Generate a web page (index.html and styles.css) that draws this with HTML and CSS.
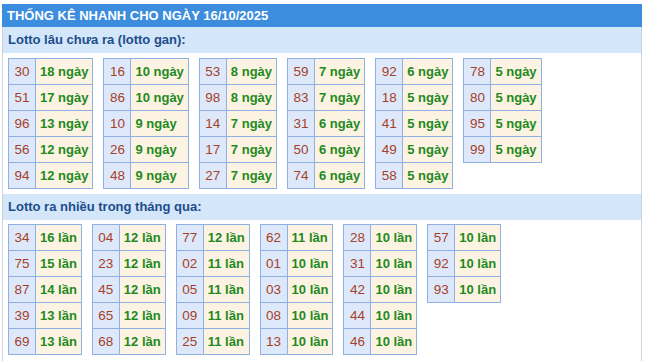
FILE: index.html
```html
<!DOCTYPE html>
<html lang="vi">
<head>
<meta charset="utf-8">
<title>Thống kê nhanh</title>
<link rel="stylesheet" href="styles.css">
</head>
<body>
<div class="wrap">
  <div class="title">THỐNG KÊ NHANH CHO NGÀY 16/10/2025</div>
  <div class="box">
    <div class="sec">Lotto lâu chưa ra (lotto gan):</div>
    <div class="tables">
      <table><tr><td class="n">30</td><td class="v">18 ngày</td></tr><tr><td class="n">51</td><td class="v">17 ngày</td></tr><tr><td class="n">96</td><td class="v">13 ngày</td></tr><tr><td class="n">56</td><td class="v">12 ngày</td></tr><tr><td class="n">94</td><td class="v">12 ngày</td></tr></table>
      <table><tr><td class="n">16</td><td class="v">10 ngày</td></tr><tr><td class="n">86</td><td class="v">10 ngày</td></tr><tr><td class="n">10</td><td class="v">9 ngày</td></tr><tr><td class="n">26</td><td class="v">9 ngày</td></tr><tr><td class="n">48</td><td class="v">9 ngày</td></tr></table>
      <table><tr><td class="n">53</td><td class="v">8 ngày</td></tr><tr><td class="n">98</td><td class="v">8 ngày</td></tr><tr><td class="n">14</td><td class="v">7 ngày</td></tr><tr><td class="n">17</td><td class="v">7 ngày</td></tr><tr><td class="n">27</td><td class="v">7 ngày</td></tr></table>
      <table><tr><td class="n">59</td><td class="v">7 ngày</td></tr><tr><td class="n">83</td><td class="v">7 ngày</td></tr><tr><td class="n">31</td><td class="v">6 ngày</td></tr><tr><td class="n">50</td><td class="v">6 ngày</td></tr><tr><td class="n">74</td><td class="v">6 ngày</td></tr></table>
      <table><tr><td class="n">92</td><td class="v">6 ngày</td></tr><tr><td class="n">18</td><td class="v">5 ngày</td></tr><tr><td class="n">41</td><td class="v">5 ngày</td></tr><tr><td class="n">49</td><td class="v">5 ngày</td></tr><tr><td class="n">58</td><td class="v">5 ngày</td></tr></table>
      <table><tr><td class="n">78</td><td class="v">5 ngày</td></tr><tr><td class="n">80</td><td class="v">5 ngày</td></tr><tr><td class="n">95</td><td class="v">5 ngày</td></tr><tr><td class="n">99</td><td class="v">5 ngày</td></tr></table>
    </div>
    <div class="sec">Lotto ra nhiều trong tháng qua:</div>
    <div class="tables tables2">
      <table><tr><td class="n">34</td><td class="v">16 lần</td></tr><tr><td class="n">75</td><td class="v">15 lần</td></tr><tr><td class="n">87</td><td class="v">14 lần</td></tr><tr><td class="n">39</td><td class="v">13 lần</td></tr><tr><td class="n">69</td><td class="v">13 lần</td></tr></table>
      <table><tr><td class="n">04</td><td class="v">12 lần</td></tr><tr><td class="n">23</td><td class="v">12 lần</td></tr><tr><td class="n">45</td><td class="v">12 lần</td></tr><tr><td class="n">65</td><td class="v">12 lần</td></tr><tr><td class="n">68</td><td class="v">12 lần</td></tr></table>
      <table><tr><td class="n">77</td><td class="v">12 lần</td></tr><tr><td class="n">02</td><td class="v">11 lần</td></tr><tr><td class="n">05</td><td class="v">11 lần</td></tr><tr><td class="n">09</td><td class="v">11 lần</td></tr><tr><td class="n">25</td><td class="v">11 lần</td></tr></table>
      <table><tr><td class="n">62</td><td class="v">11 lần</td></tr><tr><td class="n">01</td><td class="v">10 lần</td></tr><tr><td class="n">03</td><td class="v">10 lần</td></tr><tr><td class="n">08</td><td class="v">10 lần</td></tr><tr><td class="n">13</td><td class="v">10 lần</td></tr></table>
      <table><tr><td class="n">28</td><td class="v">10 lần</td></tr><tr><td class="n">31</td><td class="v">10 lần</td></tr><tr><td class="n">42</td><td class="v">10 lần</td></tr><tr><td class="n">44</td><td class="v">10 lần</td></tr><tr><td class="n">46</td><td class="v">10 lần</td></tr></table>
      <table><tr><td class="n">57</td><td class="v">10 lần</td></tr><tr><td class="n">92</td><td class="v">10 lần</td></tr><tr><td class="n">93</td><td class="v">10 lần</td></tr></table>
    </div>
  </div>
</div>
</body>
</html>
```
FILE: styles.css
```css
html, body {
  margin: 0;
  padding: 0;
  background: #ffffff;
}
body {
  font-family: "Liberation Sans", Arial, sans-serif;
  font-size: 13px;
}
.wrap {
  width: 640px;
  margin: 4px 0 0 2px;
}
.title {
  height: 23px;
  line-height: 23px;
  background: #3c8ddd;
  color: #ffffff;
  font-weight: bold;
  padding-left: 5px;
  white-space: nowrap;
}
.box {
  border-left: 1px solid #c9d3de;
  border-right: 1px solid #c9d3de;
  padding-bottom: 6px;
}
.sec {
  height: 26px;
  line-height: 26px;
  background: #d4e6f9;
  color: #1d4d8c;
  font-weight: bold;
  padding-left: 5px;
}
.tables {
  display: flex;
  align-items: flex-start;
  gap: 10px;
  padding: 5px 5px 5px;
}
.tables2 {
  padding-top: 4px;
  padding-bottom: 0;
}
table {
  border-collapse: collapse;
}
td {
  height: 25px;
  padding: 0 4px;
  border: 1px solid #8eb0e2;
  white-space: nowrap;
  vertical-align: middle;
}
td.n {
  width: 18px;
  text-align: center;
  background: #dde9fb;
  color: #a63f28;
  font-size: 13.5px;
}
td.v {
  background: #fdf3e2;
  color: #1e8a1e;
  font-weight: bold;
}
```
